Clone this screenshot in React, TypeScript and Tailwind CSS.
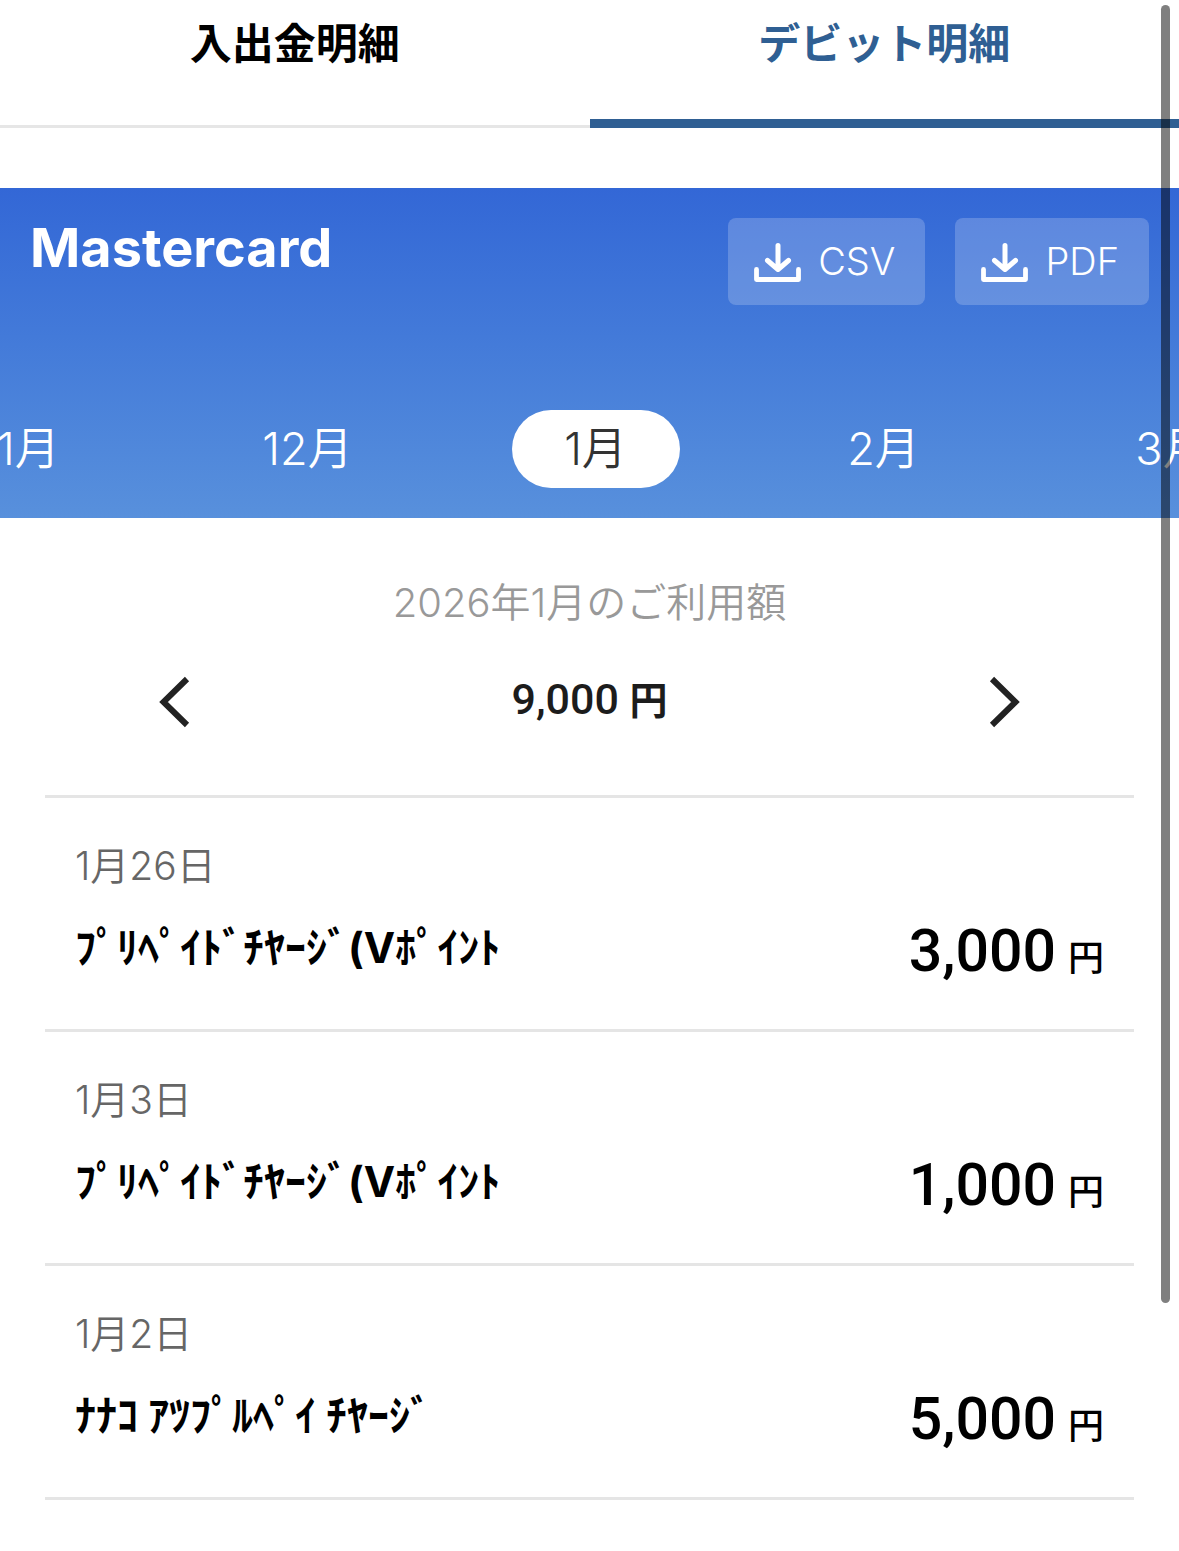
const months = ["11月", "12月", "1月", "2月", "3月"];

const items = [
  { date: "1月26日", name: "ﾌﾟﾘﾍﾟｲﾄﾞﾁﾔｰｼﾞ(Vﾎﾟｲﾝﾄ", amount: "3,000" },
  { date: "1月3日", name: "ﾌﾟﾘﾍﾟｲﾄﾞﾁﾔｰｼﾞ(Vﾎﾟｲﾝﾄ", amount: "1,000" },
  { date: "1月2日", name: "ﾅﾅｺ ｱﾂﾌﾟﾙﾍﾟｲ ﾁﾔｰｼﾞ", amount: "5,000" },
];

const DownloadButton = ({ label }: { label: string }) => {
  return (
    <button
      type="button"
      className="flex items-center h-[87px] gap-4 pl-[26px] pr-[30px] rounded-lg bg-white/20 text-[38px] font-[350]"
    >
      <svg width="48" height="42" viewBox="0 0 48 42" fill="none" stroke="currentColor">
        <path
          d="M24 4.500v23M13.500 19.500L24 28.500L34.500 19.500"
          strokeWidth="5"
          strokeLinecap="round"
          strokeLinejoin="round"
        />
        <path d="M2.500 28.500v10h42v-10" strokeWidth="4.800" strokeLinecap="round" strokeLinejoin="round" />
      </svg>
      {label}
    </button>
  );
};

const App = () => {
  return (
    <div className="relative overflow-hidden bg-white text-black font-['Inter','Noto_Sans_CJK_JP',sans-serif]">
      <nav className="grid grid-cols-2 h-32 text-[42px] leading-[60px] font-bold">
        <a href="#account" className="pt-[14px] text-center border-b-[3px] border-[#e6e6e6]">
          入出金明細
        </a>
        <a
          href="#debit"
          aria-current="page"
          className="pt-[14px] text-center text-[#2f5f93] border-b-[9px] border-[#2f5f93]"
        >
          デビット明細
        </a>
      </nav>

      <header className="mt-[60px] pb-[30px] bg-linear-to-b from-[#3367d6] to-[#5890dc] text-white">
        <div className="flex justify-between items-start pt-[30px] px-[30px]">
          <h1 className="text-[54px] leading-[60px] font-bold">Mastercard</h1>
          <div className="flex gap-[30px]">
            <DownloadButton label="CSV" />
            <DownloadButton label="PDF" />
          </div>
        </div>
        <ul className="flex justify-center mt-[105px] pl-3 text-[45px] leading-[78px] font-[350]">
          {months.map((month) => (
            <li key={month} className="w-72 shrink-0 text-center">
              <button
                type="button"
                className={
                  month === "1月" ? "w-[168px] rounded-full bg-white text-[#333]" : "w-[168px]"
                }
              >
                {month}
              </button>
            </li>
          ))}
        </ul>
      </header>

      <main className="px-[45px]">
        <section className="flex justify-between items-end px-[114px] pt-[55px] h-[280px] pb-[67px] border-b-[3px] border-[#e5e5e5]">
          <button type="button" aria-label="前の月">
            <svg width="32" height="52" viewBox="0 0 32 52" fill="none" stroke="#222" strokeWidth="6">
              <path d="M28 3L4.500 26L28 49" />
            </svg>
          </button>
          <div className="self-start text-center">
            <p className="text-[40px] leading-[60px] font-[350] text-[#999]">2026年1月のご利用額</p>
            <p className="mt-9 text-[43px] leading-[60px] font-medium text-[#1c1c1c] font-['Roboto','Noto_Sans_CJK_JP',sans-serif]">
              9,000 <span className="text-[38px] font-bold">円</span>
            </p>
          </div>
          <button type="button" aria-label="次の月">
            <svg width="32" height="52" viewBox="0 0 32 52" fill="none" stroke="#222" strokeWidth="6">
              <path d="M4 3L27.500 26L4 49" />
            </svg>
          </button>
        </section>

        <ul className="mb-[51px]">
          {items.map((item) => (
            <li key={item.date} className="h-[234px] px-[30px] pt-[38px] border-b-[3px] border-[#e5e5e5]">
              <p className="text-[39px] leading-[60px] font-[350] text-[#666]">{item.date}</p>
              <div className="flex justify-between items-start mt-4">
                <span className="text-[42px] leading-[72px] font-bold">{item.name}</span>
                <span className="text-[59px] leading-[78px] font-medium font-['Roboto','Noto_Sans_CJK_JP',sans-serif]">
                  {item.amount}
                  <span className="ml-3 text-[36px]">円</span>
                </span>
              </div>
            </li>
          ))}
        </ul>
      </main>

      {/* scroll indicator */}
      <div className="absolute top-[5px] right-[9px] w-[9px] h-[1298px] rounded-full bg-black/50" />
    </div>
  );
};

export default App;
